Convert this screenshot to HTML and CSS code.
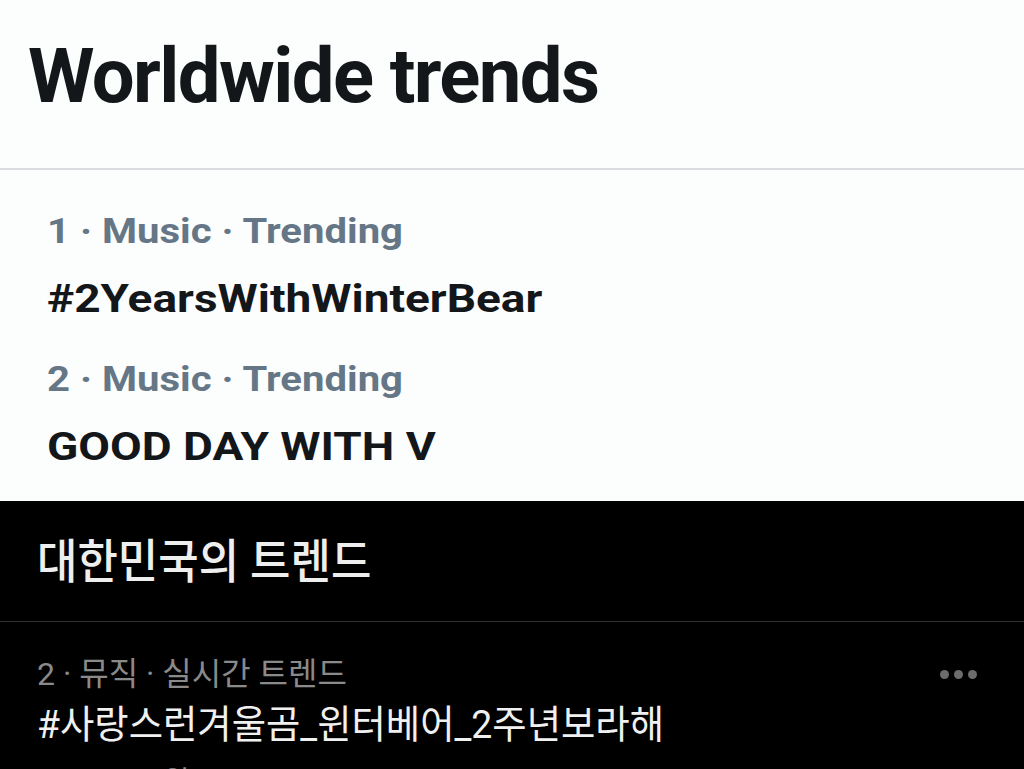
FILE: index.html
```html
<!DOCTYPE html>
<html lang="en">
<head>
<meta charset="utf-8">
<link rel="stylesheet" href="styles.css">
</head>
<body>
<section class="light">
  <header class="light-head">
    <h1 class="title">Worldwide trends</h1>
  </header>
  <ul class="trends">
    <li class="trend">
      <div class="meta"><span class="wide-meta">1 · Music · Trending</span></div>
      <div class="name"><span class="wide-name">#2YearsWithWinterBear</span></div>
    </li>
    <li class="trend">
      <div class="meta"><span class="wide-meta">2 · Music · Trending</span></div>
      <div class="name"><span class="wide-name">GOOD DAY WITH V</span></div>
    </li>
  </ul>
</section>
<section class="dark">
  <header class="dark-head">
    <h2 class="dark-title"><span class="narrow-title">대한민국의 트렌드</span></h2>
  </header>
  <div class="dark-trend">
    <div class="dark-row">
      <div class="dark-meta">2 · 뮤직 · 실시간 트렌드</div>
      <div class="more"><span></span><span></span><span></span></div>
    </div>
    <div class="dark-name"><span class="narrow-name">#사랑스런겨울곰_윈터베어_2주년보라해</span></div>
    <div class="dark-count">24,816 트윗</div>
  </div>
</section>
</body>
</html>
```

FILE: styles.css
```css
* { box-sizing: border-box; margin: 0; padding: 0; }
html, body { width: 1024px; height: 769px; overflow: hidden; }
body {
  font-family: Roboto, "Noto Sans CJK KR", sans-serif;
  background: #000;
}
.light {
  background: #fcfdfd;
  height: 501px;
}
.light-head {
  height: 170px;
  border-bottom: 2px solid #d9dde0;
  padding: 31px 0 0 28px;
}
.title {
  font-size: 76px;
  font-weight: 700;
  color: #14171a;
  line-height: 90px;
  letter-spacing: -1.6px;
}
.trends { list-style: none; padding: 42px 0 0 47px; }
.trend { display: flex; flex-direction: column; }
.trend + .trend { margin-top: 39px; }
.meta {
  font-size: 35px;
  font-weight: 700;
  color: #657786;
  line-height: 40px;
  margin-bottom: 25px;
}
.name {
  font-size: 38px;
  font-weight: 700;
  color: #14171a;
  line-height: 44px;
}
.wide-meta, .wide-name, .narrow-title, .narrow-name {
  display: inline-block;
  transform-origin: left center;
  white-space: nowrap;
}
.wide-meta { transform: scaleX(1.145); }
.wide-name { transform: scaleX(1.21); }
.narrow-title { transform: scaleX(0.935); }
.narrow-name { transform: scaleX(0.957); }
.dark {
  background: #000;
  color: #e7e9ea;
}
.dark-head {
  height: 121px;
  border-bottom: 1px solid #303030;
  padding: 33px 0 0 37px;
}
.dark-title {
  font-size: 47px;
  font-weight: 500;
  line-height: 56px;
  color: #eeeeee;
}
.dark-trend { padding: 30px 47px 0 37px; }
.dark-row { display: flex; justify-content: space-between; align-items: center; }
.dark-meta {
  font-size: 32px;
  color: #8a8a8a;
  line-height: 44px;
  white-space: nowrap;
}
.more { display: flex; gap: 5px; }
.more span {
  width: 9px; height: 9px; border-radius: 50%;
  background: #6c6c6c;
}
.dark-name {
  font-size: 39px;
  color: #f0f0f0;
  line-height: 54px;
  padding-top: 2px;
}
.dark-count {
  font-size: 30px;
  color: #8a8a8a;
  line-height: 44px;
  padding-top: 8px;
}
```
